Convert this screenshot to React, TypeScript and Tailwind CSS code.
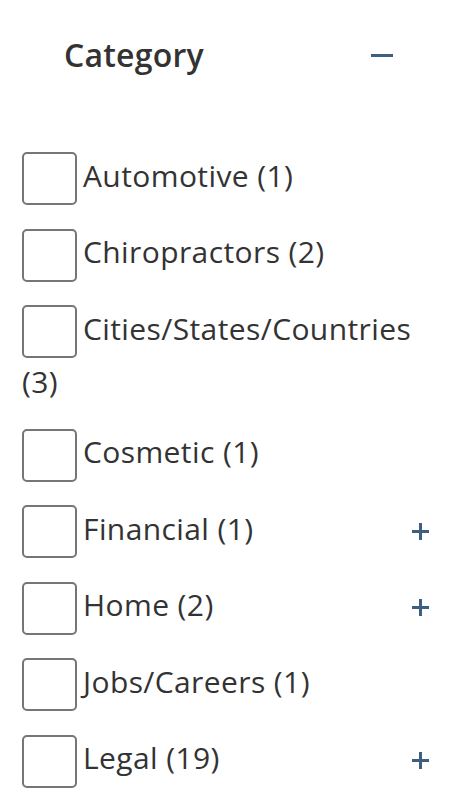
const items = [
  { name: "Automotive (1)", more: false },
  { name: "Chiropractors (2)", more: false },
  { name: "Cities/States/Countries (3)", more: false },
  { name: "Cosmetic (1)", more: false },
  { name: "Financial (1)", more: true },
  { name: "Home (2)", more: true },
  { name: "Jobs/Careers (1)", more: false },
  { name: "Legal (19)", more: true },
];

const Plus = () => (
  <svg width="17" height="17" viewBox="0 0 17 17">
    <path d="M8.5 0v17M0 8.5h17" stroke="#3f5f82" strokeWidth="3" />
  </svg>
);

const App = () => {
  return (
    <div className="min-h-screen bg-white text-[#333] font-['Open_Sans',sans-serif]">
      <div className="flex items-center justify-between pl-[64px] pr-[79px] pt-[34px]">
        <h5 className="text-[32px] font-semibold leading-[42px] tracking-[0.2px]">Category</h5>
        <span className="block w-[22px] h-[3px] bg-[#3f5f82]" />
      </div>

      <ul className="pl-[22px] pr-[43px] mt-[76px]">
        {items.map((item) => (
          <li key={item.name} className="flex items-start mb-[23px]">
            <label className="flex-1 text-[30px] leading-[47px] tracking-[0.4px]">
              <span className="inline-block align-middle w-[55px] h-[53px] border-2 border-[#767676] rounded-[5px] mr-[6px]" />
              {item.name}
            </label>
            {item.more && (
              <span className="flex items-center h-[53px]">
                <Plus />
              </span>
            )}
          </li>
        ))}
      </ul>
    </div>
  );
};

export default App;
